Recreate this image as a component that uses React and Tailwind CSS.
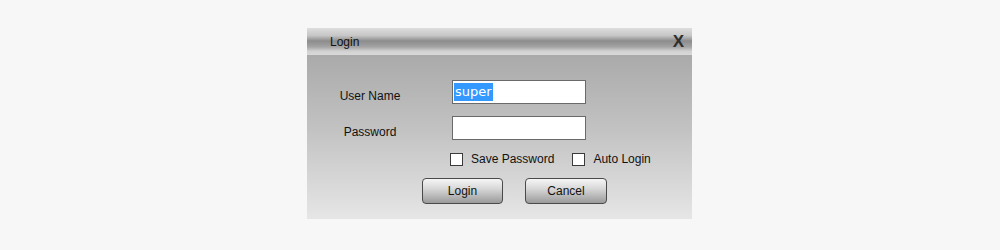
import { useState } from 'react'

const font = { fontFamily: '"Liberation Sans", Arial, sans-serif' }

const Checkbox = ({ label }) => (
  <label className="flex items-center">
    <span className="w-[13px] h-[13px] border border-[#3a3a3a] bg-white" />
    <span className="ml-[8px] text-[12px] text-[#111]">{label}</span>
  </label>
)

const Button = ({ children, className = '' }) => (
  <button
    className={`h-[26px] rounded-[4px] border border-[#4a4a4a] bg-[linear-gradient(to_bottom,#f6f6f6_0%,#d8d8d8_40%,#9a9a9a_100%)] text-[12px] text-[#111] ${className}`}
  >
    {children}
  </button>
)

const App = () => {
  const [password, setPassword] = useState('')

  return (
    <div className="h-[250px] w-[1000px] bg-[#f7f7f7] pt-[28px]" style={font}>
      <div className="ml-[307px] w-[385px] h-[191px] flex flex-col">
        {/* Title bar */}
        <div className="h-[27px] flex items-center justify-between bg-[linear-gradient(to_bottom,#dedede_0%,#c6c6c6_28%,#8c8c8c_48%,#a4a4a4_70%,#d2d2d2_86%,#d8d8d8_100%)]">
          <span className="ml-[23px] text-[12px] text-[#111]">Login</span>
          <span className="mr-[8px] text-[17px] font-bold text-[#2e2e2e] leading-none">X</span>
        </div>

        {/* Body */}
        <div className="flex-1 flex flex-col bg-[linear-gradient(to_bottom,#aaaaaa_0%,#c2c2c2_45%,#e6e6e6_100%)]">
          <div className="mt-[25px] flex items-start">
            <span className="ml-[13px] w-[100px] mt-[9px] leading-[14px] text-center text-[12px] text-[#111]">User Name</span>
            <div className="ml-[32px] w-[134px] h-[24px] border border-[#6a6a6a] bg-white flex items-center px-[1px]">
              <span
                className="h-[18px] leading-[18px] px-[1px] bg-[#3399ff] text-white text-[13px]"
                style={{ fontFamily: '"DejaVu Sans", Verdana, sans-serif' }}
              >
                super
              </span>
            </div>
          </div>

          <div className="mt-[12px] flex items-start">
            <span className="ml-[13px] w-[100px] mt-[9px] leading-[14px] text-center text-[12px] text-[#111]">Password</span>
            <input
              type="password"
              value={password}
              onChange={e => setPassword(e.target.value)}
              className="ml-[32px] w-[134px] h-[24px] border border-[#6a6a6a] bg-white outline-none"
            />
          </div>

          <div className="mt-[13px] h-[12px] ml-[143px] flex items-center gap-[18px]">
            <Checkbox label="Save Password" />
            <Checkbox label="Auto Login" />
          </div>

          <div className="mt-[13px] ml-[115px] flex gap-[22px]">
            <Button className="w-[81px]">Login</Button>
            <Button className="w-[82px]">Cancel</Button>
          </div>
        </div>
      </div>
    </div>
  )
}

export default App
